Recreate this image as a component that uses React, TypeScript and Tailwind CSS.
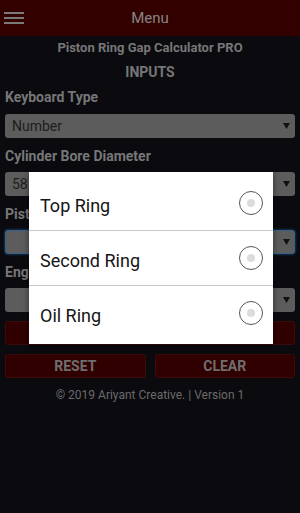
import type { ReactNode } from 'react';

function Arrow() {
  return (
    <svg width="7" height="6" viewBox="0 0 7 6" className="shrink-0">
      <path d="M0 0 L7 0 L3.5 6 Z" fill="#111" />
    </svg>
  );
}

function SelectBox({ value, focused }: { value?: string; focused?: boolean }) {
  return (
    <div
      className={
        focused
          ? 'flex h-[24px] items-center justify-between rounded-[3px] border border-[#35628c] bg-[#5c5c5c] pl-[7px] pr-[4px] shadow-[0_0_3px_#2a5a88]'
          : 'flex h-[24px] items-center justify-between rounded-[3px] bg-[#5c5c5c] pl-[7px] pr-[5px]'
      }
    >
      <span className="text-[14px] text-[#1c1c1c]">{value ?? ''}</span>
      <Arrow />
    </div>
  );
}

function Label({ children }: { children: ReactNode }) {
  return (
    <div className="mb-[6px] mt-[8px] h-[20px] text-[14px] font-bold leading-[20px] text-[#777]">
      {children}
    </div>
  );
}

function RingOption({ name }: { name: string }) {
  return (
    <div className="flex h-[54px] items-center justify-between pl-[11px] pr-[10px]">
      <span className="pt-[4px] text-[18px] text-[#151515]">{name}</span>
      <span className="flex h-[24px] w-[24px] items-center justify-center rounded-full border border-[#555]">
        <span className="h-[8px] w-[8px] rounded-full bg-[#dcdcdc]" />
      </span>
    </div>
  );
}

export default function App() {
  return (
    <div className="relative min-h-[513px] w-[300px] bg-[#0a0a0f] font-['Roboto',sans-serif]">
      <div className="flex h-[36px] items-center bg-[#330000]">
        <div className="flex w-[28px] flex-col gap-[3px] pl-[4px]">
          <span className="h-[2px] w-[20px] bg-[#7a7a7a]" />
          <span className="h-[2px] w-[20px] bg-[#7a7a7a]" />
          <span className="h-[2px] w-[20px] bg-[#7a7a7a]" />
        </div>
        <div className="flex-1 pr-[28px] text-center text-[15px] text-[#858585]">Menu</div>
      </div>

      <div className="px-[5px]">
        <div className="h-[24px] text-center text-[13px] font-bold leading-[24px] text-[#777]">
          Piston Ring Gap Calculator PRO
        </div>
        <div className="h-[24px] text-center text-[14px] font-bold leading-[24px] text-[#777]">INPUTS</div>

        <div className="mb-[7px] mt-[3px] h-[20px] text-[14px] font-bold leading-[20px] text-[#777]">
          Keyboard Type
        </div>
        <SelectBox value="Number" />

        <Label>Cylinder Bore Diameter</Label>
        <SelectBox value="58.0" />

        <Label>Piston Ring Type</Label>
        <SelectBox focused />

        <Label>Engine Type</Label>
        <SelectBox />

        <div className="mt-[9px] h-[24px] rounded-[3px] border border-[#3e0b0b] bg-[#300000]" />

        <div className="mt-[9px] flex gap-[9px]">
          <div className="flex h-[24px] flex-1 items-center justify-center rounded-[3px] border border-[#3e0b0b] bg-[#300000] text-[14px] font-bold text-[#6e6e6e]">
            RESET
          </div>
          <div className="flex h-[24px] flex-1 items-center justify-center rounded-[3px] border border-[#3e0b0b] bg-[#300000] text-[14px] font-bold text-[#6e6e6e]">
            CLEAR
          </div>
        </div>

        <div className="mt-[8px] text-center text-[12px] text-[#6a6a6a]">
          © 2019 Ariyant Creative. | Version 1
        </div>
      </div>

      <div className="absolute left-[29px] top-[172px] w-[244px] bg-white py-[4px] shadow-[0_2px_6px_rgba(0,0,0,0.5)]">
        <RingOption name="Top Ring" />
        <div className="h-px bg-[#c8c8c8]" />
        <RingOption name="Second Ring" />
        <div className="h-px bg-[#c8c8c8]" />
        <RingOption name="Oil Ring" />
      </div>
    </div>
  );
}
